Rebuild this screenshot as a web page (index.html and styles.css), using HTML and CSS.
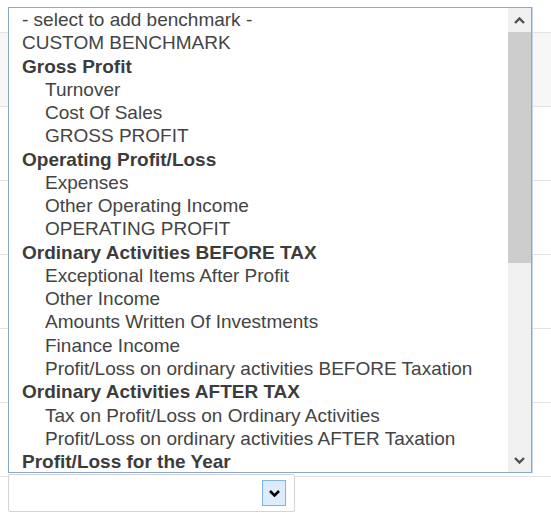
FILE: index.html
```html
<!DOCTYPE html>
<html>
<head>
<meta charset="utf-8">
<link rel="stylesheet" href="styles.css">
</head>
<body>
<div class="page">
  <div class="rows">
    <div class="row row-top"></div>
    <div class="row row-alt"></div>
    <div class="row"></div>
    <div class="row"></div>
    <div class="row"></div>
    <div class="row"></div>
    <div class="row"></div>
  </div>
  <div class="overlay">
    <div class="listbox">
      <ul class="options">
        <li class="opt">- select to add benchmark -</li>
        <li class="opt">CUSTOM BENCHMARK</li>
        <li class="opt group">Gross Profit</li>
        <li class="opt sub">Turnover</li>
        <li class="opt sub">Cost Of Sales</li>
        <li class="opt sub">GROSS PROFIT</li>
        <li class="opt group">Operating Profit/Loss</li>
        <li class="opt sub">Expenses</li>
        <li class="opt sub">Other Operating Income</li>
        <li class="opt sub">OPERATING PROFIT</li>
        <li class="opt group">Ordinary Activities BEFORE TAX</li>
        <li class="opt sub">Exceptional Items After Profit</li>
        <li class="opt sub">Other Income</li>
        <li class="opt sub">Amounts Written Of Investments</li>
        <li class="opt sub">Finance Income</li>
        <li class="opt sub">Profit/Loss on ordinary activities BEFORE Taxation</li>
        <li class="opt group">Ordinary Activities AFTER TAX</li>
        <li class="opt sub">Tax on Profit/Loss on Ordinary Activities</li>
        <li class="opt sub">Profit/Loss on ordinary activities AFTER Taxation</li>
        <li class="opt group">Profit/Loss for the Year</li>
      </ul>
      <div class="scrollbar">
        <div class="sb-btn">
          <svg width="11" height="7" viewBox="0 0 11 7"><path d="M1 6 L5.5 1.5 L10 6" fill="none" stroke="#505050" stroke-width="2.4"/></svg>
        </div>
        <div class="sb-thumb"></div>
        <div class="sb-track"></div>
        <div class="sb-btn">
          <svg width="11" height="7" viewBox="0 0 11 7"><path d="M1 1 L5.5 5.5 L10 1" fill="none" stroke="#505050" stroke-width="2.4"/></svg>
        </div>
      </div>
    </div>
    <div class="select">
      <div class="select-btn">
        <svg width="11" height="7" viewBox="0 0 11 7"><path d="M1 1 L5.5 5.5 L10 1" fill="none" stroke="#000" stroke-width="2.6"/></svg>
      </div>
    </div>
  </div>
</div>
</body>
</html>
```

FILE: styles.css
```css
*, *::before, *::after {
  box-sizing: border-box;
}

html, body {
  margin: 0;
  padding: 0;
  background: #ffffff;
}

.page {
  display: grid;
  width: 551px;
  height: 517px;
  overflow: hidden;
}

.rows, .overlay {
  grid-area: 1 / 1;
}

.rows {
  display: flex;
  flex-direction: column;
}

.row {
  height: 74px;
  border-bottom: 1px solid #e2e2e2;
  flex: none;
}

.row-top {
  height: 33px;
}

.row-alt {
  background: #f7f7f7;
}

.overlay {
  display: flex;
  flex-direction: column;
  align-items: flex-start;
  padding: 7px 0 0 8px;
}

.listbox {
  display: flex;
  width: 524px;
  height: 466px;
  border: 1px solid #8aa8cc;
  box-shadow: 1px 0 0 #c3d4e8;
  background: #ffffff;
}

.options {
  flex: 1;
  list-style: none;
  margin: 0;
  padding: 0 0 0 13px;
  overflow: hidden;
  font-family: "Liberation Sans", Arial, sans-serif;
  font-size: 19px;
  line-height: 23.26px;
  color: #444444;
}

.opt {
  white-space: nowrap;
}

.group {
  font-weight: bold;
  color: #3c3c3c;
}

.sub {
  padding-left: 23px;
}

.scrollbar {
  width: 23px;
  display: flex;
  flex-direction: column;
  background: #f0f0f0;
}

.sb-btn {
  height: 24px;
  flex: none;
  display: flex;
  align-items: center;
  justify-content: center;
}

.sb-thumb {
  height: 231px;
  flex: none;
  background: #cdcdcd;
}

.sb-track {
  flex: 1;
}

.select {
  margin-top: 1px;
  width: 287px;
  height: 38px;
  border: 1px solid #d4d4d4;
  border-radius: 2px;
  background: #ffffff;
  display: flex;
  align-items: center;
  justify-content: flex-end;
  padding-right: 8px;
}

.select-btn {
  width: 24px;
  height: 26px;
  border: 1px solid #7eb4ea;
  background: #dcecfc;
  display: flex;
  align-items: center;
  justify-content: center;
}
```
